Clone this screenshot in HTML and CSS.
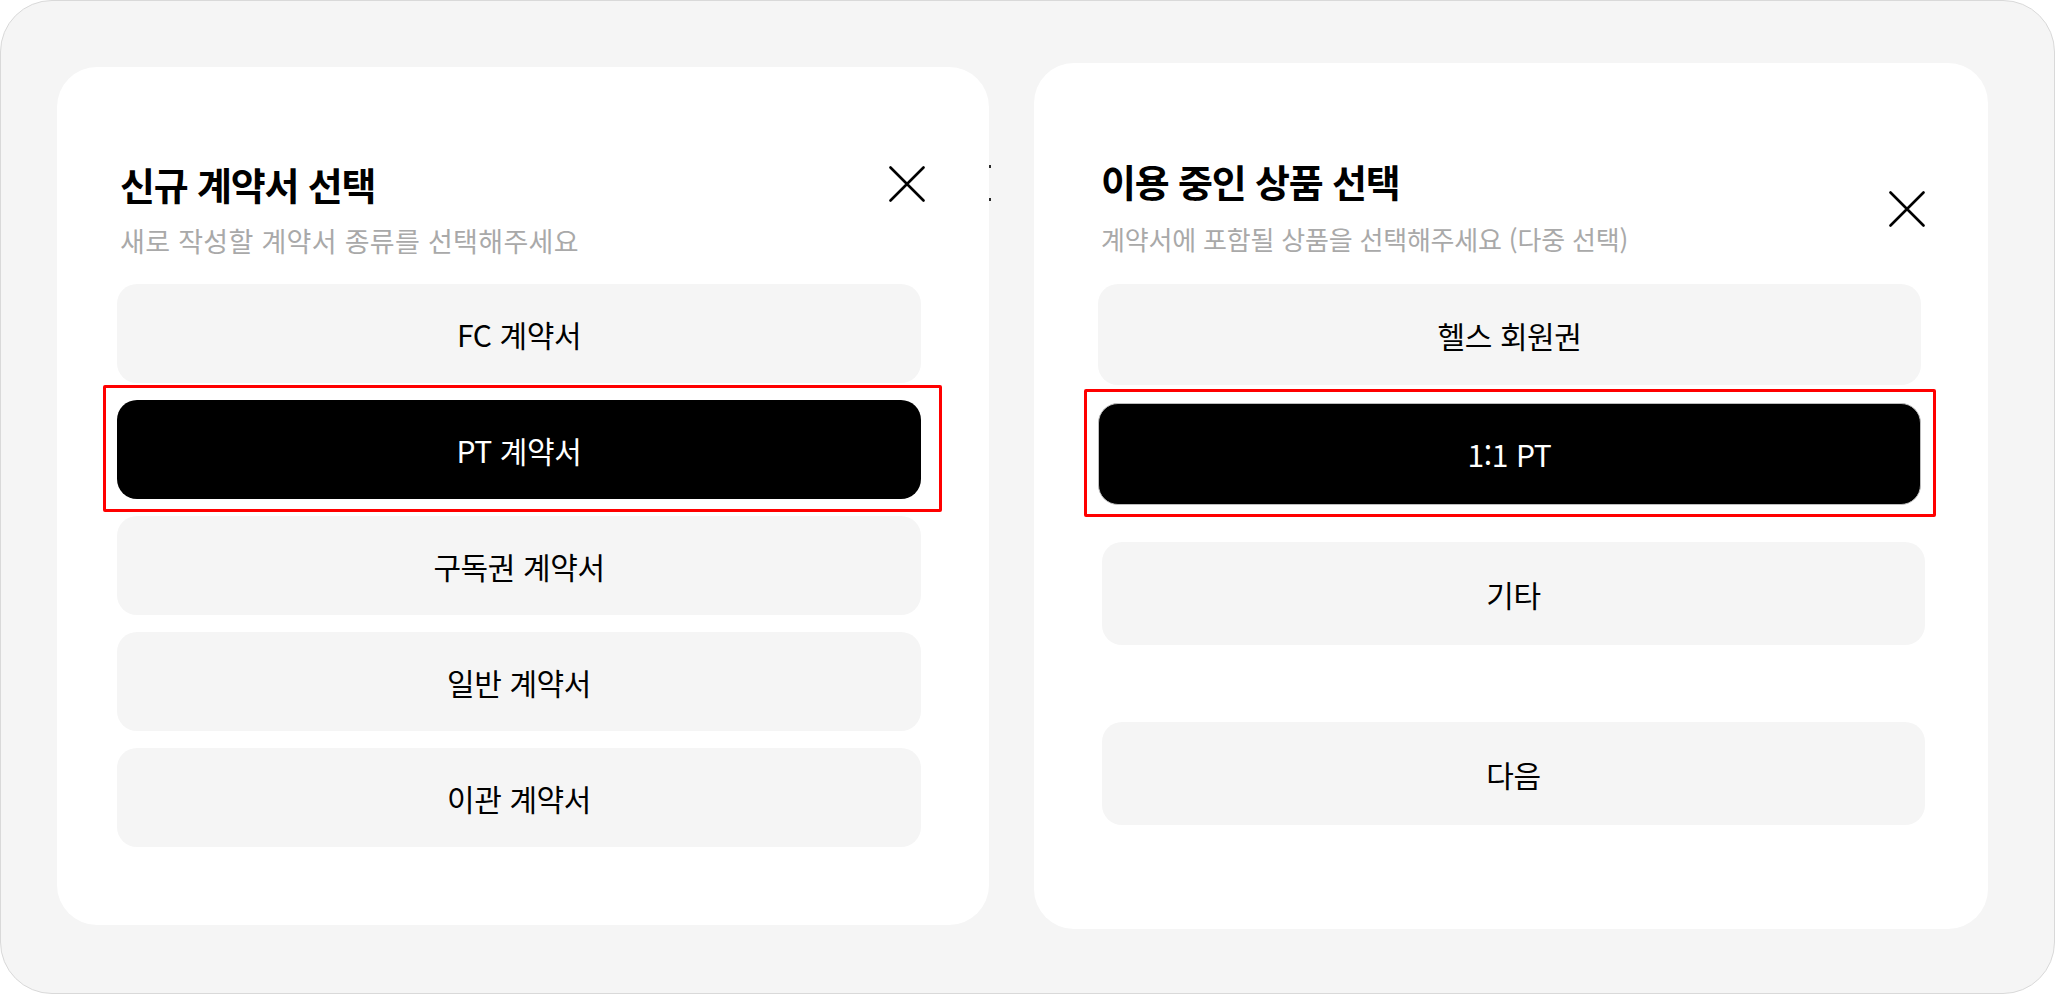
FILE: index.html
```html
<!DOCTYPE html>
<html lang="ko">
<head>
<meta charset="utf-8">
<title>계약서 선택</title>
<link rel="stylesheet" href="styles.css">
</head>
<body>
<div class="frame">
  <section class="panel panel-left">
    <header class="head head-inline">
      <div class="head-text">
        <div class="title-row">
          <h2 class="title">신규 계약서 선택</h2>
          <button class="close" aria-label="닫기">
            <svg viewBox="0 0 36 36" width="36" height="36"><path d="M1.5 1.5 L34.5 34.5 M34.5 1.5 L1.5 34.5" stroke="#000" stroke-width="2.6" stroke-linecap="round" fill="none"/></svg>
          </button>
        </div>
        <p class="sub sub-left">새로 작성할 계약서 종류를 선택해주세요</p>
      </div>
    </header>
    <div class="list list-left">
      <button class="opt">FC 계약서</button>
      <button class="opt opt-on opt-mark-left">PT 계약서</button>
      <button class="opt">구독권 계약서</button>
      <button class="opt">일반 계약서</button>
      <button class="opt">이관 계약서</button>
    </div>
    <span class="edge-marks"></span>
  </section>

  <section class="panel panel-right">
    <header class="head head-side">
      <div class="head-text">
        <h2 class="title">이용 중인 상품 선택</h2>
        <p class="sub sub-right">계약서에 포함될 상품을 선택해주세요 (다중 선택)</p>
      </div>
      <button class="close close-right" aria-label="닫기">
        <svg viewBox="0 0 36 36" width="36" height="36"><path d="M1.5 1.5 L34.5 34.5 M34.5 1.5 L1.5 34.5" stroke="#000" stroke-width="2.6" stroke-linecap="round" fill="none"/></svg>
      </button>
    </header>
    <div class="list list-right">
      <button class="opt opt-r">헬스 회원권</button>
      <button class="opt opt-r opt-on opt-border opt-mark-right">1:1 PT</button>
      <button class="opt opt-r opt-shift opt-gap1">기타</button>
      <button class="opt opt-r opt-shift opt-gap2">다음</button>
    </div>
  </section>
</div>
</body>
</html>
```

FILE: styles.css
```css
* { box-sizing: border-box; }

html, body {
  margin: 0;
  padding: 0;
  background: #ffffff;
}

body {
  font-family: "Noto Sans CJK KR", "Noto Sans", sans-serif;
  color: #000;
}

.frame {
  width: 2055px;
  height: 994px;
  background: #f5f5f5;
  border: 1px solid #d9d9d9;
  border-radius: 52px;
  display: flex;
  align-items: flex-start;
  gap: 45px;
  padding: 62px 0 0 56px;
}

.panel {
  position: relative;
  background: #ffffff;
  border-radius: 40px;
  display: flex;
  flex-direction: column;
}

.panel-left {
  width: 932px;
  height: 858px;
  margin-top: 4px;
  padding: 95px 68px 0 60px;
}

.panel-right {
  width: 954px;
  height: 866px;
  padding: 96px 67px 0 64px;
}

.head {
  display: flex;
  padding-left: 3px;
}

.head-text {
  flex: 1;
  min-width: 0;
}

.title-row {
  display: flex;
  align-items: center;
  justify-content: space-between;
}

.head-side {
  align-items: center;
  justify-content: space-between;
}

.title {
  margin: 0;
  font-size: 38px;
  line-height: 44px;
  font-weight: 700;
  letter-spacing: -1.2px;
}

.sub {
  margin: 20px 0 0 0;
  font-size: 26px;
  line-height: 30px;
  color: #a9a9a9;
  font-weight: 400;
  letter-spacing: -0.2px;
}

.sub-left {
  font-size: 27px;
  letter-spacing: 0.3px;
}

.sub-right {
  margin-top: 21px;
}

.close {
  width: 36px;
  height: 36px;
  padding: 0;
  border: 0;
  background: transparent;
  display: flex;
  align-items: center;
  justify-content: center;
  margin-right: -4px;
}

.close-right {
  margin-right: -4px;
  margin-top: 4px;
}

.list {
  display: flex;
  flex-direction: column;
}

.list-left {
  margin-top: 28px;
  gap: 17px;
}

.list-right {
  margin-top: 30px;
  gap: 18px;
}

.opt {
  position: relative;
  height: 99px;
  width: 100%;
  border: 0;
  border-radius: 20px;
  background: #f5f5f5;
  color: #000;
  font-family: "Noto Sans CJK KR", "Noto Sans", sans-serif;
  font-size: 30px;
  font-weight: 400;
  letter-spacing: -0.4px;
  display: flex;
  align-items: center;
  justify-content: center;
  padding: 0;
}

.opt-r {
  height: 101px;
}

.opt-on {
  background: #000;
  color: #fff;
}

.opt-on::before {
  content: "";
  position: absolute;
  border: 3px solid #ff0000;
  border-radius: 2px;
  pointer-events: none;
}

.opt-mark-left::before {
  top: -15px;
  bottom: -13px;
  left: -14px;
  right: -21px;
}

.opt-mark-right::before {
  top: -15px;
  bottom: -13px;
  left: -15px;
  right: -16px;
}

.opt-border {
  border: 1px solid #bdbdbd;
  height: 102px;
}

.opt-shift {
  margin-left: 4px;
  margin-right: -4px;
  height: 103px;
}

.opt-gap1 {
  margin-top: 19px;
}

.opt-gap2 {
  margin-top: 59px;
}

.edge-marks {
  position: absolute;
  left: 100%;
  top: 98px;
  width: 2px;
  height: 3px;
  background: #2a2a2a;
}

.edge-marks::after {
  content: "";
  position: absolute;
  left: 0;
  top: 33px;
  width: 2px;
  height: 3px;
  background: #2a2a2a;
}
```
